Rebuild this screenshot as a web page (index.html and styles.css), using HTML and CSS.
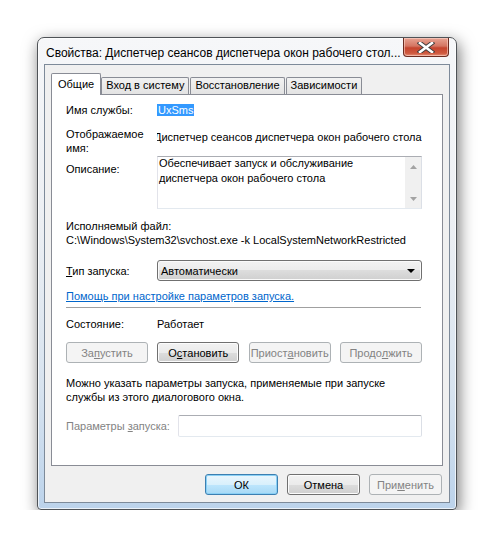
FILE: index.html
```html
<!DOCTYPE html>
<html lang="ru">
<head>
<meta charset="utf-8">
<link rel="stylesheet" href="styles.css">
</head>
<body>
<div class="window">
  <div class="titlebar">
    <div class="title">Свойства: Диспетчер сеансов диспетчера окон рабочего стол...</div>
    <div class="close">
      <svg width="18" height="11" viewBox="0 0 18 11"><path d="M3 1 L15 10 M15 1 L3 10" stroke="#3b3b3b" stroke-width="4.4" stroke-linecap="square" fill="none"/><path d="M3 1 L15 10 M15 1 L3 10" stroke="#ffffff" stroke-width="2.6" stroke-linecap="square" fill="none"/></svg>
    </div>
  </div>
  <div class="client">
    <div class="tabs">
      <div class="tab active">Общие</div>
      <div class="tab">Вход в систему</div>
      <div class="tab">Восстановление</div>
      <div class="tab">Зависимости</div>
    </div>
    <div class="panel">
      <div class="row r-name">
        <div class="label">Имя службы:</div>
        <div class="value"><span class="sel">UxSms</span></div>
      </div>
      <div class="row r-disp">
        <div class="label">Отображаемое<br>имя:</div>
        <div class="value clip"><span class="shift">Диспетчер сеансов диспетчера окон рабочего стола</span></div>
      </div>
      <div class="row r-desc">
        <div class="label">Описание:</div>
        <div class="descbox">
          <div class="desctext">Обеспечивает запуск и обслуживание диспетчера окон рабочего стола</div>
          <div class="vscroll">
            <svg width="7" height="4" viewBox="0 0 7 4"><path d="M0 4 L3.5 0 L7 4 Z" fill="#a3a3a3"/></svg>
            <svg width="7" height="4" viewBox="0 0 7 4"><path d="M0 0 L3.5 4 L7 0 Z" fill="#a3a3a3"/></svg>
          </div>
        </div>
      </div>
      <div class="exe">
        <div class="line">Исполняемый файл:</div>
        <div class="line">C:\Windows\System32\svchost.exe -k LocalSystemNetworkRestricted</div>
      </div>
      <div class="row r-type">
        <div class="label"><u>Т</u>ип запуска:</div>
        <div class="combo">
          <span>Автоматически</span>
          <svg width="8" height="4" viewBox="0 0 8 4"><path d="M0 0 L8 0 L4 4 Z" fill="#000"/></svg>
        </div>
      </div>
      <div class="link">Помощь при настройке параметров запуска.</div>
      <div class="sep"></div>
      <div class="row r-state">
        <div class="label">Состояние:</div>
        <div class="value">Работает</div>
      </div>
      <div class="btnrow">
        <div class="btn disabled">За<u>п</u>устить</div>
        <div class="btn">О<u>с</u>тановить</div>
        <div class="btn disabled">Приост<u>а</u>новить</div>
        <div class="btn disabled">Продо<u>л</u>жить</div>
      </div>
      <div class="note">Можно указать параметры запуска, применяемые при запуске<br>службы из этого диалогового окна.</div>
      <div class="row r-param">
        <div class="label grey">Параметры <u>з</u>апуска:</div>
        <div class="input"></div>
      </div>
    </div>
    <div class="footer">
      <div class="btn default">ОК</div>
      <div class="btn">Отмена</div>
      <div class="btn disabled">При<u>м</u>енить</div>
    </div>
  </div>
</div>
</body>
</html>
```
FILE: styles.css
```css
*, *::before, *::after {
  box-sizing: border-box;
}
html, body {
  margin: 0;
  padding: 0;
  background: #ffffff;
}
body {
  font-family: "Liberation Sans", Arial, sans-serif;
  font-size: 11px;
  color: #000;
  padding: 37px 0 0 37px;
}
.window {
  width: 420px;
  height: 473px;
  border: 1px solid #4f5357;
  border-radius: 7px 7px 4px 4px;
  background: linear-gradient(#f6f7f9 0%, #eceff3 40%, #d7e3ef 75%, #bcd3eb 100%);
  box-shadow: 2px 5px 16px rgba(0, 0, 0, 0.55), inset 0 0 0 1px rgba(255, 255, 255, 0.7);
  display: flex;
  flex-direction: column;
  padding: 0 6px 6px 6px;
}
.titlebar {
  height: 26px;
  display: flex;
  justify-content: space-between;
  align-items: flex-start;
  flex: none;
}
.title {
  padding: 8px 0 0 2px;
  font-size: 12px;
  line-height: 15px;
  color: #000;
  white-space: nowrap;
}
.close {
  width: 46px;
  height: 19px;
  border: 1px solid #6b2b20;
  border-top: none;
  border-radius: 0 0 4px 4px;
  background: linear-gradient(#e8a493 0%, #d47562 45%, #c5442e 55%, #cf5a3f 85%, #e6927b 100%);
  box-shadow: inset 0 0 0 1px rgba(255, 220, 210, 0.55);
  display: flex;
  align-items: center;
  justify-content: center;
  margin-right: 1px;
  flex: none;
}
.client {
  flex: 1;
  border: 1px solid #7d8a99;
  background: #f0f0f0;
  padding: 8px 6px 0 6px;
  display: flex;
  flex-direction: column;
}
.tabs {
  display: flex;
  height: 21px;
  align-items: flex-end;
  position: relative;
  z-index: 1;
  gap: 1px;
}
.tab {
  height: 17px;
  line-height: 15px;
  padding: 0 4px;
  border: 1px solid #898c95;
  border-bottom: none;
  background: linear-gradient(#f2f2f2, #e3e3e3);
  white-space: nowrap;
  border-radius: 2px 2px 0 0;
}
.tab.active {
  height: 22px;
  background: #ffffff;
  padding: 0 6px;
  line-height: 20px;
  margin-bottom: -1px;
  margin-right: -1px;
}
.panel {
  height: 372px;
  border: 1px solid #898c95;
  background: #ffffff;
  padding: 8px 20px 0 14px;
  flex: none;
}
.row {
  display: grid;
  grid-template-columns: 91px 1fr;
}
.r-name {
  height: 15px;
  line-height: 15px;
}
.sel {
  background: #3399ff;
  color: #fff;
  padding: 0 1px;
}
.r-disp {
  margin-top: 9px;
  line-height: 14px;
}
.r-disp .value {
  padding-top: 3px;
}
.clip {
  overflow: hidden;
  white-space: nowrap;
}
.shift {
  display: inline-block;
  margin-left: -3px;
}
.r-desc {
  margin-top: 1px;
}
.r-desc .label {
  padding-top: 6px;
  line-height: 14px;
}
.descbox {
  height: 53px;
  border: 1px solid #abadb3;
  border-left-color: #e2e3ea;
  border-right-color: #dbdfe6;
  border-bottom-color: #e3e9ef;
  display: flex;
  background: #fff;
}
.desctext {
  flex: 1;
  padding: 0 4px 0 1px;
  line-height: 15px;
  margin-top: -1px;
}
.vscroll {
  width: 16px;
  background: #f0f0f0;
  display: flex;
  flex-direction: column;
  justify-content: space-between;
  align-items: center;
  padding: 8px 0 7px;
}
.exe {
  margin-top: 10px;
  line-height: 14px;
}
.r-type {
  margin-top: 13px;
  align-items: center;
}
.combo {
  height: 21px;
  border: 1px solid #707070;
  border-radius: 3px;
  background: linear-gradient(#f2f2f2 0%, #ebebeb 50%, #dddddd 50%, #cfcfcf 100%);
  box-shadow: inset 0 0 0 1px #fafafa;
  display: flex;
  align-items: center;
  justify-content: space-between;
  padding: 0 6px 0 3px;
}
.combo svg {
  margin-top: 1px;
}
.link {
  margin-top: 8px;
  line-height: 14px;
  color: #0066cc;
  text-decoration: underline;
}
.sep {
  margin-top: 4px;
  height: 1px;
  background: #a0a0a0;
  margin-right: 1px;
}
.r-state {
  margin-top: 9px;
  line-height: 14px;
}
.btnrow {
  margin-top: 11px;
  display: flex;
  justify-content: space-between;
}
.btn {
  width: 82px;
  height: 21px;
  border: 1px solid #707070;
  border-radius: 3px;
  background: linear-gradient(#f2f2f2 0%, #ebebeb 50%, #dddddd 50%, #cfcfcf 100%);
  box-shadow: inset 0 0 0 1px #fcfcfc;
  display: flex;
  align-items: center;
  justify-content: center;
  white-space: nowrap;
}
.btn.disabled {
  border-color: #adb2b5;
  background: #f4f4f4;
  box-shadow: none;
  color: #838383;
}
.btn.default {
  border-color: #3c7fb1;
  background: linear-gradient(#eaf6fd 0%, #d9f0fc 50%, #bee6fd 50%, #a7d9f5 100%);
  box-shadow: inset 0 0 0 1px #8ad0f5;
}
.note {
  margin-top: 13px;
  line-height: 14px;
}
.r-param {
  margin-top: 11px;
  grid-template-columns: 112px 1fr;
  align-items: center;
}
.grey {
  color: #838383;
}
.input {
  height: 22px;
  border: 1px solid #abadb3;
  border-left-color: #e2e3ea;
  border-right-color: #dbdfe6;
  border-bottom-color: #e3e9ef;
  border-radius: 2px;
  background: #fff;
}
.footer {
  display: flex;
  justify-content: flex-end;
  gap: 9px;
  margin-top: 8px;
  padding-right: 1px;
}
.footer .btn {
  width: 73px;
}
```
